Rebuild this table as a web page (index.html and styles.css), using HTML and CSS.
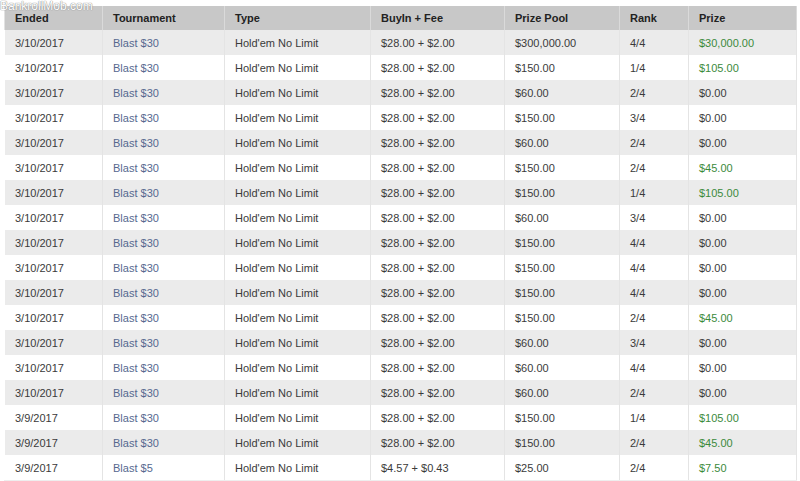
FILE: index.html
```html
<!DOCTYPE html>
<html>
<head>
<meta charset="utf-8">
<link rel="stylesheet" href="styles.css">
</head>
<body>
<div class="watermark">BankrollMob.com</div>
<table class="results">
<colgroup>
<col class="c1"><col class="c2"><col class="c3"><col class="c4"><col class="c5"><col class="c6"><col class="c7">
</colgroup>
<thead>
<tr><th>Ended</th><th>Tournament</th><th>Type</th><th>BuyIn + Fee</th><th>Prize Pool</th><th>Rank</th><th>Prize</th></tr>
</thead>
<tbody>
<tr><td>3/10/2017</td><td class="link">Blast $30</td><td>Hold'em No Limit</td><td>$28.00 + $2.00</td><td>$300,000.00</td><td>4/4</td><td class="win">$30,000.00</td></tr>
<tr><td>3/10/2017</td><td class="link">Blast $30</td><td>Hold'em No Limit</td><td>$28.00 + $2.00</td><td>$150.00</td><td>1/4</td><td class="win">$105.00</td></tr>
<tr><td>3/10/2017</td><td class="link">Blast $30</td><td>Hold'em No Limit</td><td>$28.00 + $2.00</td><td>$60.00</td><td>2/4</td><td>$0.00</td></tr>
<tr><td>3/10/2017</td><td class="link">Blast $30</td><td>Hold'em No Limit</td><td>$28.00 + $2.00</td><td>$150.00</td><td>3/4</td><td>$0.00</td></tr>
<tr><td>3/10/2017</td><td class="link">Blast $30</td><td>Hold'em No Limit</td><td>$28.00 + $2.00</td><td>$60.00</td><td>2/4</td><td>$0.00</td></tr>
<tr><td>3/10/2017</td><td class="link">Blast $30</td><td>Hold'em No Limit</td><td>$28.00 + $2.00</td><td>$150.00</td><td>2/4</td><td class="win">$45.00</td></tr>
<tr><td>3/10/2017</td><td class="link">Blast $30</td><td>Hold'em No Limit</td><td>$28.00 + $2.00</td><td>$150.00</td><td>1/4</td><td class="win">$105.00</td></tr>
<tr><td>3/10/2017</td><td class="link">Blast $30</td><td>Hold'em No Limit</td><td>$28.00 + $2.00</td><td>$60.00</td><td>3/4</td><td>$0.00</td></tr>
<tr><td>3/10/2017</td><td class="link">Blast $30</td><td>Hold'em No Limit</td><td>$28.00 + $2.00</td><td>$150.00</td><td>4/4</td><td>$0.00</td></tr>
<tr><td>3/10/2017</td><td class="link">Blast $30</td><td>Hold'em No Limit</td><td>$28.00 + $2.00</td><td>$150.00</td><td>4/4</td><td>$0.00</td></tr>
<tr><td>3/10/2017</td><td class="link">Blast $30</td><td>Hold'em No Limit</td><td>$28.00 + $2.00</td><td>$150.00</td><td>4/4</td><td>$0.00</td></tr>
<tr><td>3/10/2017</td><td class="link">Blast $30</td><td>Hold'em No Limit</td><td>$28.00 + $2.00</td><td>$150.00</td><td>2/4</td><td class="win">$45.00</td></tr>
<tr><td>3/10/2017</td><td class="link">Blast $30</td><td>Hold'em No Limit</td><td>$28.00 + $2.00</td><td>$60.00</td><td>3/4</td><td>$0.00</td></tr>
<tr><td>3/10/2017</td><td class="link">Blast $30</td><td>Hold'em No Limit</td><td>$28.00 + $2.00</td><td>$60.00</td><td>4/4</td><td>$0.00</td></tr>
<tr><td>3/10/2017</td><td class="link">Blast $30</td><td>Hold'em No Limit</td><td>$28.00 + $2.00</td><td>$60.00</td><td>2/4</td><td>$0.00</td></tr>
<tr><td>3/9/2017</td><td class="link">Blast $30</td><td>Hold'em No Limit</td><td>$28.00 + $2.00</td><td>$150.00</td><td>1/4</td><td class="win">$105.00</td></tr>
<tr><td>3/9/2017</td><td class="link">Blast $30</td><td>Hold'em No Limit</td><td>$28.00 + $2.00</td><td>$150.00</td><td>2/4</td><td class="win">$45.00</td></tr>
<tr><td>3/9/2017</td><td class="link">Blast $5</td><td>Hold'em No Limit</td><td>$4.57 + $0.43</td><td>$25.00</td><td>2/4</td><td class="win">$7.50</td></tr>
</tbody>
</table>
</body>
</html>
```

FILE: styles.css
```css
html, body {
  margin: 0;
  background: #ffffff;
}
body {
  padding: 6px 4px 0 4px;
  font-family: "Liberation Sans", Arial, sans-serif;
  font-size: 11px;
  color: #3a3a3a;
  position: relative;
}
.watermark {
  position: absolute;
  left: 0;
  top: 0;
  font-family: "Liberation Sans", Arial, sans-serif;
  font-size: 12px;
  line-height: 13px;
  color: #ffffff;
  text-shadow: 0 0 1px #888, 0 0 1px #888;
  z-index: 2;
}
.results {
  width: 792px;
  border-collapse: collapse;
  table-layout: fixed;
}
.c1 { width: 98px; }
.c2 { width: 122px; }
.c3 { width: 146px; }
.c4 { width: 134px; }
.c5 { width: 115px; }
.c6 { width: 69px; }
.c7 { width: 108px; }
.results th {
  height: 24px;
  padding: 0 0 0 10px;
  text-align: left;
  font-weight: bold;
  color: #222222;
  background: #c8c8c8;
  border-left: 1px solid #e2e2e2;
  border-right: 1px solid #dadada;
}
.results td {
  height: 25px;
  padding: 0 0 0 10px;
  border-left: 1px solid #ffffff;
  border-right: 1px solid #e4e4e4;
  white-space: nowrap;
}
.results tbody tr:nth-child(odd) td {
  background: #ebebeb;
}
.results tbody tr:last-child td {
  border-bottom: 1px solid #eeeeee;
}
.results td.link {
  color: #56688f;
}
.results td.win {
  color: #3b8a3b;
}
```
